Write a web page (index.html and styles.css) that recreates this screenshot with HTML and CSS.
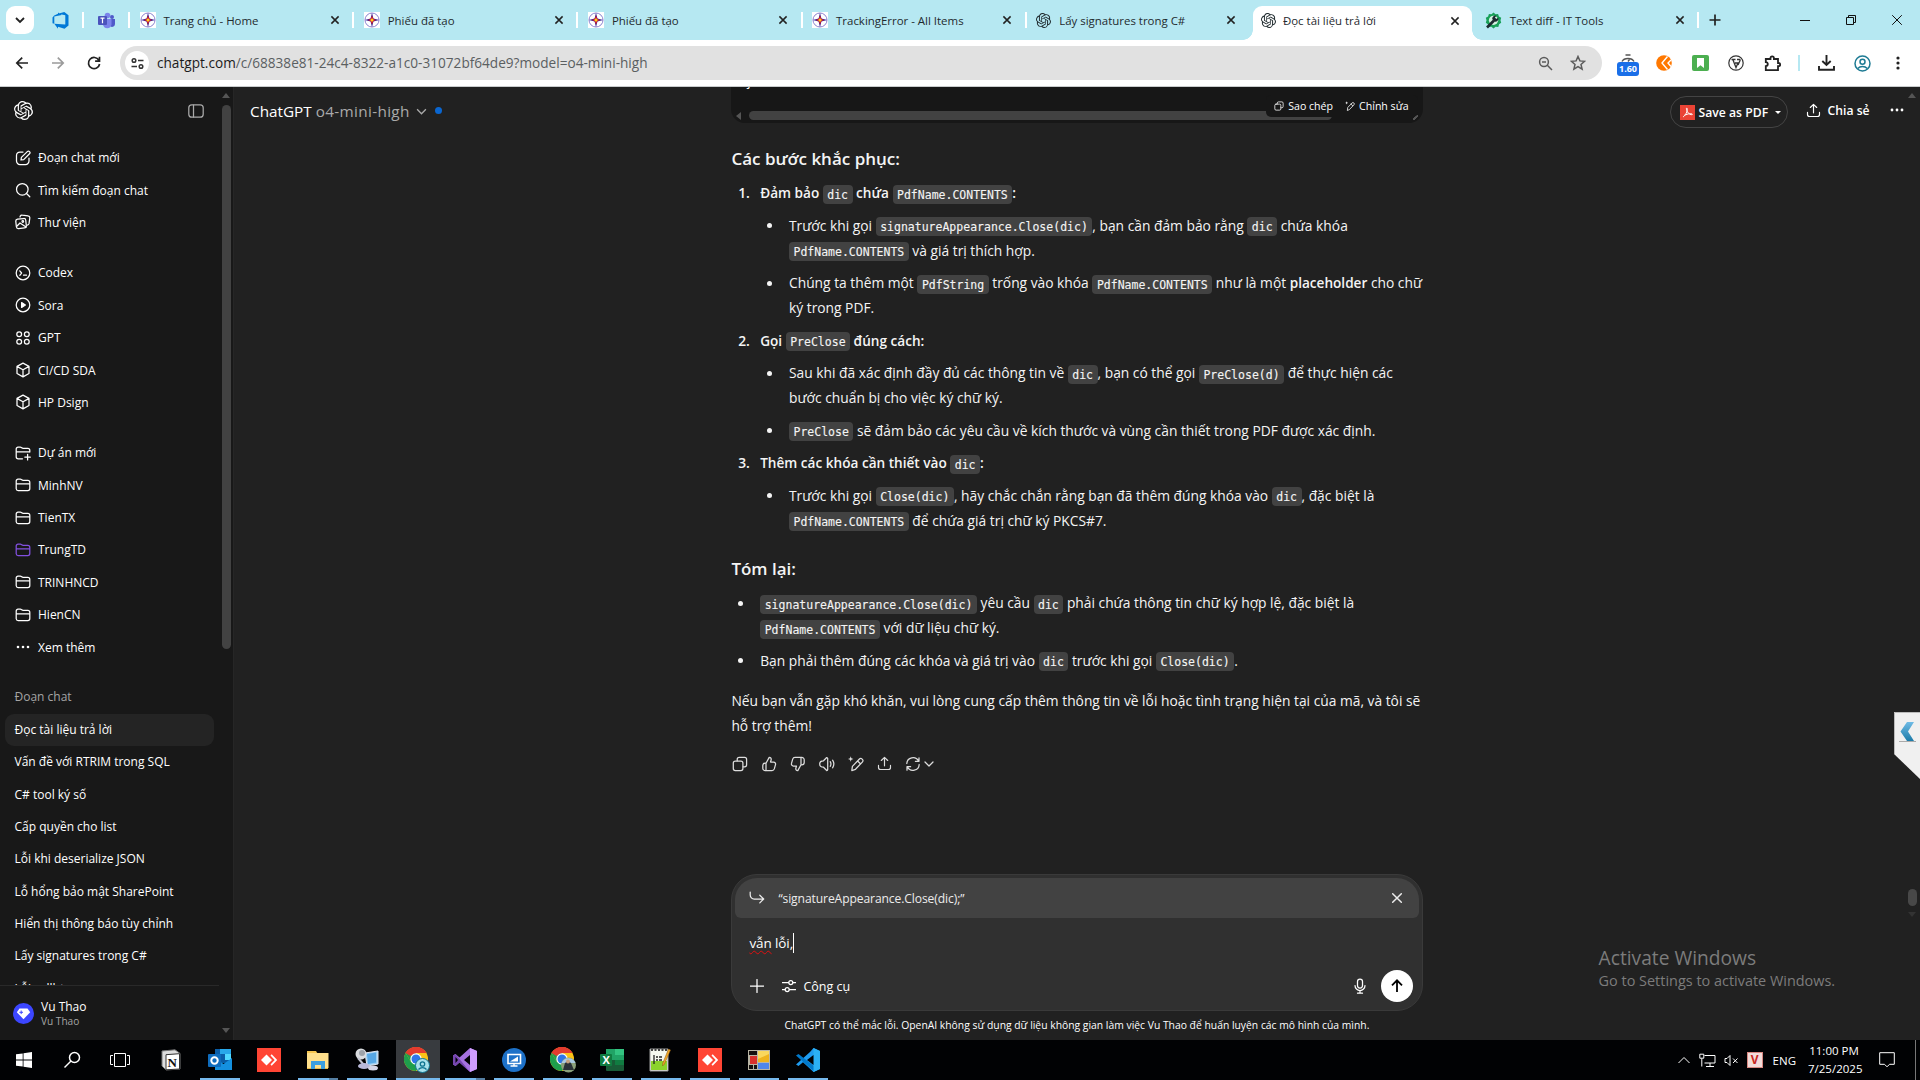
FILE: index.html
```
<!DOCTYPE html>
<html lang="vi">
<head>
<meta charset="utf-8">
<title>Đọc tài liệu trả lời</title>
<link rel="stylesheet" href="styles.css">
</head>
<body>
<svg width="0" height="0" class="defs">
  <symbol id="openai" viewBox="0 0 24 24"><path fill="currentColor" d="M22.2819 9.8211a5.9847 5.9847 0 0 0-.5157-4.9108 6.0462 6.0462 0 0 0-6.5098-2.9A6.0651 6.0651 0 0 0 4.9807 4.1818a5.9847 5.9847 0 0 0-3.9977 2.9 6.0462 6.0462 0 0 0 .7427 7.0966 5.98 5.98 0 0 0 .511 4.9107 6.051 6.051 0 0 0 6.5146 2.9001A5.9847 5.9847 0 0 0 13.2599 24a6.0557 6.0557 0 0 0 5.7718-4.2058 5.9894 5.9894 0 0 0 3.9977-2.9001 6.0557 6.0557 0 0 0-.7475-7.0729zm-9.022 12.6081a4.4755 4.4755 0 0 1-2.8764-1.0408l.1419-.0804 4.7783-2.7582a.7948.7948 0 0 0 .3927-.6813v-6.7369l2.02 1.1686a.071.071 0 0 1 .038.052v5.5826a4.504 4.504 0 0 1-4.4945 4.4944zm-9.6607-4.1254a4.4708 4.4708 0 0 1-.5346-3.0137l.142.0852 4.783 2.7582a.7712.7712 0 0 0 .7806 0l5.8428-3.3685v2.3324a.0804.0804 0 0 1-.0332.0615L9.74 19.9502a4.4992 4.4992 0 0 1-6.1408-1.6464zM2.3408 7.8956a4.485 4.485 0 0 1 2.3655-1.9728V11.6a.7664.7664 0 0 0 .3879.6765l5.8144 3.3543-2.0201 1.1685a.0757.0757 0 0 1-.071 0l-4.8303-2.7865A4.504 4.504 0 0 1 2.3408 7.872zm16.5963 3.8558L13.1038 8.364 15.1192 7.2a.0757.0757 0 0 1 .071 0l4.8303 2.7913a4.4944 4.4944 0 0 1-.6765 8.1042v-5.6772a.79.79 0 0 0-.407-.667zm2.0107-3.0231l-.142-.0852-4.7735-2.7818a.7759.7759 0 0 0-.7854 0L9.409 9.2297V6.8974a.0662.0662 0 0 1 .0284-.0615l4.8303-2.7866a4.4992 4.4992 0 0 1 6.6802 4.66zM8.3065 12.863l-2.02-1.1638a.0804.0804 0 0 1-.038-.0567V6.0742a4.4992 4.4992 0 0 1 7.3757-3.4537l-.142.0805L8.704 5.459a.7948.7948 0 0 0-.3927.6813zm1.0976-2.3654l2.602-1.4998 2.6069 1.4998v2.9994l-2.5974 1.4997-2.6067-1.4997Z"/></symbol>
  <symbol id="x" viewBox="0 0 10 10"><path d="M1.4 1.4l7.2 7.2M8.6 1.4L1.4 8.6"/></symbol>
  <symbol id="evn" viewBox="0 0 16 16"><rect width="16" height="16" fill="#fff" stroke="none"/><circle cx="8" cy="8" r="7" fill="none" stroke="#8d83d0" stroke-width="1"/><path d="M8 .8L9.4 6.6 15.2 8 9.4 9.4 8 15.2 6.6 9.4.8 8 6.6 6.6z" fill="#3a1f8f" stroke="none"/><path d="M8 3.5L9.3 6.7 12 8 9.3 9.3 8 12.5 6.7 9.3 4 8 6.7 6.7z" fill="#d5202e" stroke="none"/><circle cx="8" cy="8" r="1.5" fill="#ffd21f" stroke="none"/></symbol>
  <symbol id="folder" viewBox="0 0 16 16"><path d="M1.2 11.8V4A1.8 1.8 0 0 1 3 2.2h2.3c1.2 0 1.6 1.2 2.8 1.2h4.7a2 2 0 0 1 2 2v6.2a2 2 0 0 1-2 2H3.2a2 2 0 0 1-2-1.8zM1.2 6.8h13.6"/></symbol>
  <symbol id="cube" viewBox="0 0 16 16"><path d="M8 1.1l6 3.3v7.1L8 14.9l-6-3.4V4.4zM2.3 4.6L8 7.8l5.7-3.2M8 7.8v6.8"/></symbol>
  <symbol id="copy" viewBox="0 0 16 16"><rect x="1.3" y="5" width="9.6" height="9.6" rx="2"/><path d="M5.2 4.8V3.4a2 2 0 0 1 2-2h5.4a2 2 0 0 1 2 2v5.4a2 2 0 0 1-2 2h-1.4"/></symbol>
  <symbol id="wand" viewBox="0 0 16 16"><path d="M3.8 14.6l.6-4.2 6.800-7.200a2.100 2.100 0 0 1 3.100 2.900L7.500 13.300zM9.600 5l2.800 2.700"/><path d="M2.700 .3l.7 2 2 .7-2 .7-.7 2-.7-2-2-.7 2-.7z" fill="currentColor" stroke="none"/></symbol>
  <symbol id="share" viewBox="0 0 16 16"><path d="M8 10.5V1.6M4.6 4.8L8 1.4l3.4 3.4M1.6 10v2.2a2.2 2.2 0 0 0 2.2 2.2h8.4a2.2 2.2 0 0 0 2.2-2.2V10"/></symbol>
  <symbol id="down" viewBox="0 0 10 10"><path d="M1 3l4 4 4-4"/></symbol>
  <symbol id="thumb" viewBox="0 0 16 16"><path d="M5 7.2L8.2 1.4c1.6 0 2.3 1.2 1.9 2.6L9.5 6h3.1a2 2 0 0 1 1.9 2.6l-1.2 4.3a2.4 2.4 0 0 1-2.3 1.7H4.2a2.4 2.4 0 0 1-2.4-2.4V9.6A2.4 2.4 0 0 1 4.2 7.2H5v7.2"/></symbol>
  <symbol id="anydesk" viewBox="0 0 24 24"><rect width="24" height="24" fill="#ff4534"/><path d="M9.5 6.5L15 12l-5.500 5.500L4 12z" fill="#fff"/><path d="M13.5 7.500l1.200-1.200L20.200 12l-5.500 5.700-1.200-1.200L17.700 12z" fill="#fff"/></symbol>
  <symbol id="chrome" viewBox="0 0 24 24"><circle cx="12" cy="12" r="12" fill="#fbc116"/><path d="M12 12L1.600 6A12 12 0 0 1 22.400 6H12z" fill="#e33b2e"/><path d="M1.600 6A12 12 0 0 0 12 24l5.200-9L12 12 6.800 15z" fill="#1e9e4c"/><path d="M1.600 6L6.800 15 12 6z" fill="#1e9e4c"/><path d="M1.600 6A12 12 0 0 1 22.400 6H12L6.500 9z" fill="#e33b2e"/><circle cx="12" cy="12" r="5.700" fill="#fff"/><circle cx="12" cy="12" r="4.500" fill="#2f76e8"/></symbol>
</svg>

<div class="desktop">
<header class="tabstrip">
  <div class="tabsearch"><svg width="10" height="10"><use href="#down"/></svg></div>
  <div class="pinned"><svg width="17" height="17" viewBox="0 0 17 17"><path d="M.5 5.500L2.200 3.400 6 1.800V.4l3.600 2.500-7.300 1.500v7.300L.5 11.200zM16.500 3.200v10.400l-4 3.200-6.500-2.100v2L2.300 11.700l11 .9V3.200L6 1.800 12.300 0z" fill="#0078d7"/></svg></div>
  <div class="pinned"><svg width="17" height="17" viewBox="0 0 17 17"><circle cx="14" cy="5" r="2" fill="#5059c9"/><circle cx="9.500" cy="3.500" r="2.800" fill="#7b83eb"/><path d="M11 7h6v5a3 3 0 0 1-4.500 2.600z" fill="#5059c9"/><path d="M5 7h8.500v5.500a4.300 4.300 0 0 1-8.500 0z" fill="#7b83eb"/><rect x="0" y="4" width="9" height="9" rx="1" fill="#4b53bc"/><path d="M2.500 6.200h4M4.500 6.200v5" stroke="#fff" stroke-width="1.200"/></svg></div>
  <div class="tab"><svg class="fav" width="16" height="16"><use href="#evn"/></svg><span>Trang chủ - Home</span><svg class="cl" width="10" height="10"><use href="#x"/></svg></div>
  <div class="tab"><svg class="fav" width="16" height="16"><use href="#evn"/></svg><span>Phiếu đã tạo</span><svg class="cl" width="10" height="10"><use href="#x"/></svg></div>
  <div class="tab"><svg class="fav" width="16" height="16"><use href="#evn"/></svg><span>Phiếu đã tạo</span><svg class="cl" width="10" height="10"><use href="#x"/></svg></div>
  <div class="tab"><svg class="fav" width="16" height="16"><use href="#evn"/></svg><span>TrackingError - All Items</span><svg class="cl" width="10" height="10"><use href="#x"/></svg></div>
  <div class="tab nosep"><svg class="fav" width="15" height="15"><use href="#openai"/></svg><span>Lấy signatures trong C#</span><svg class="cl" width="10" height="10"><use href="#x"/></svg></div>
  <div class="tab active"><svg class="fav" width="15" height="15"><use href="#openai"/></svg><span>Đọc tài liệu trả lời</span><svg class="cl" width="10" height="10"><use href="#x"/></svg></div>
  <div class="tab"><svg class="fav" width="17" height="17" viewBox="0 0 17 17"><path d="M8.500 .5l2 1.700 2.600-.3.800 2.500 2.300 1.300-.7 2.600.7 2.500-2.100 1.500-.8 2.600-2.700-.1-2.100 1.700-2.100-1.700-2.700.1-.8-2.600L.8 10.800l.7-2.500L.8 5.700l2.300-1.300.8-2.500 2.600.3z" fill="#18a058"/><circle cx="8.500" cy="8.300" r="4.600" fill="#d5f1e2"/><path d="M2 15.500L9 8.500" stroke="#1c2a30" stroke-width="2.600"/><path d="M7.200 7a3.200 3.200 0 0 1 4.300-3.300L9.900 5.500l1.500 1.600 1.900-1.600A3.200 3.200 0 0 1 9.500 9.600z" fill="#1c2a30"/></svg><span>Text diff - IT Tools</span><svg class="cl" width="10" height="10"><use href="#x"/></svg></div>
  <svg class="newtab" width="12" height="12" viewBox="0 0 12 12"><path d="M6 .5v11M.5 6h11"/></svg>
  <div class="winbtns">
    <svg width="10" height="10" viewBox="0 0 10 10"><path d="M0 5.500h10"/></svg>
    <svg width="10" height="10" viewBox="0 0 10 10"><path d="M.5 2.500h7v7h-7zM2.500 2.500v-2h7v7h-2"/></svg>
    <svg width="10" height="10" viewBox="0 0 10 10"><path d="M.2 .2l9.600 9.600M9.800 .2L.2 9.800"/></svg>
  </div>
</header>

<div class="toolbar">
  <svg class="nav" width="36" height="18" viewBox="0 0 36 18"><path d="M24 9H13M18.200 3.600L12.800 9l5.400 5.400"/></svg>
  <svg class="nav dim" width="36" height="18" viewBox="0 0 36 18"><path d="M12 9h11M17.800 3.600L23.200 9l-5.400 5.400"/></svg>
  <svg class="nav" width="36" height="18" viewBox="0 0 36 18"><path d="M22.900 6.200A5.600 5.600 0 1 0 23.600 10M23.500 2.800v4.400h-4.400"/></svg>
  <div class="omnibox">
    <div class="chip"><svg width="13" height="13" viewBox="0 0 13 13"><circle cx="3" cy="3.500" r="1.800"/><path d="M7 3.500h5.500M.5 9.500H6"/><circle cx="10" cy="9.500" r="1.800"/></svg></div>
    <div class="url"><b>chatgpt.com</b>/c/68838e81-24c4-8322-a1c0-31072bf64de9?model=o4-mini-high</div>
    <svg width="15" height="15" viewBox="0 0 15 15"><circle cx="6" cy="6" r="4.400"/><path d="M9.300 9.300l4.700 4.700M4 6h4"/></svg>
    <svg class="star" width="16" height="16" viewBox="0 0 16 16"><path d="M8 1.500l1.900 4.400 4.700.4-3.600 3.100 1.100 4.700L8 11.600l-4.100 2.500L5 9.400 1.400 6.300l4.700-.4z"/></svg>
  </div>
  <div class="exts">
    <div class="timer"><svg width="16" height="8" viewBox="0 0 16 8"><path d="M2 7.500C4 3.500 12 3.500 14 7.500M5.500 1h5M8 7.500l1.500-2" fill="none" stroke="#555" stroke-width="1.400"/></svg><span>1.60</span></div>
    <svg width="16" height="16" viewBox="0 0 16 16"><circle cx="8" cy="8" r="7.800" fill="#ff7800"/><path d="M11.500 1.500L6 8l5.500 6.500M15 5l-3 3 3 3.500" fill="none" stroke="#fff" stroke-width="1.400"/></svg>
    <svg width="17" height="16" viewBox="0 0 17 16"><rect width="17" height="16" rx="2" fill="#4caf50"/><path d="M5 3h7v10l-3.500-2.800L5 13z" fill="#fff"/></svg>
    <svg width="16" height="16" viewBox="0 0 16 16"><circle cx="8" cy="8" r="7.200" fill="none" stroke="#333" stroke-width="1.200"/><path d="M3.500 4.500h4M5 5l3 7.500L10 8M7 8h3.500M9 4.500h3.500M12.300 5L10 10" fill="none" stroke="#333" stroke-width="1.300"/></svg>
    <svg width="17" height="17" viewBox="0 0 17 17"><path d="M1.800 4h4.700V3a1.700 1.700 0 0 1 3.400 0v1H14v4h.6a1.500 1.500 0 0 1 0 3.200H14v4H1.800v-4.100a2 2 0 0 0 0-4z" fill="none" stroke="#222" stroke-width="1.800"/></svg>
    <i class="extsep"></i>
    <svg width="17" height="16" viewBox="0 0 17 16"><path d="M8.500 0v9.500M4.300 6l4.200 4L12.700 6M1 11v3.700h15V11" fill="none" stroke="#222" stroke-width="1.900"/></svg>
    <svg width="17" height="17" viewBox="0 0 17 17" fill="none" stroke="#1e7b94" stroke-width="1.500"><circle cx="8.500" cy="8.500" r="7.500"/><circle cx="8.500" cy="6.800" r="2.500"/><path d="M3.700 13.500c2.500-2.700 7.100-2.700 9.600 0"/></svg>
    <svg width="4" height="14" viewBox="0 0 4 14" fill="#222"><circle cx="2" cy="2" r="1.600"/><circle cx="2" cy="7" r="1.600"/><circle cx="2" cy="12" r="1.600"/></svg>
  </div>
</div>

<div class="page">
  <aside class="sidebar">
    <div class="sidecol">
      <div class="sidehead"><svg width="19" height="19"><use href="#openai"/></svg><svg class="ln" width="16" height="14" viewBox="0 0 16 14"><rect x=".8" y=".8" width="14.400" height="12.400" rx="3"/><path d="M5.500 1v12"/></svg></div>
      <div class="group">
        <div class="item"><svg class="ln" width="16" height="16" viewBox="0 0 16 16"><path d="M8 2H5a3.500 3.500 0 0 0-3.500 3.500V11A3.500 3.500 0 0 0 5 14.500h5.500A3.500 3.500 0 0 0 14 11V8M6 10l.4-2.600L12.300 1.600a1.500 1.500 0 0 1 2.200 2.200L8.700 9.600z"/></svg>Đoạn chat mới</div>
        <div class="item"><svg class="ln" width="16" height="16" viewBox="0 0 16 16"><circle cx="7.300" cy="7.300" r="5.800"/><path d="M11.500 11.500l3.300 3.300"/></svg>Tìm kiếm đoạn chat</div>
        <div class="item"><svg class="ln" width="16" height="16" viewBox="0 0 16 16"><rect x="1" y="4.800" width="10" height="9.500" rx="2" transform="rotate(-6 6 9)"/><path d="M5 3l.3-.9a1.800 1.800 0 0 1 2-1l5.700.7a2 2 0 0 1 1.800 2.300l-.8 5.600a2 2 0 0 1-1.700 1.500M2 12l3-3 6 4"/><circle cx="7.800" cy="7.500" r=".8"/></svg>Thư viện</div>
      </div>
      <div class="group">
        <div class="item"><svg class="ln" width="16" height="16" viewBox="0 0 16 16"><circle cx="8" cy="8" r="6.800"/><path d="M4.800 5.800L6.600 8l-1.800 2.300M8.500 10.200h3"/></svg>Codex</div>
        <div class="item"><svg class="ln" width="16" height="16" viewBox="0 0 16 16"><circle cx="8" cy="8" r="6.800"/><path d="M6.600 5.600L10.400 8l-3.800 2.400z" fill="currentColor"/></svg>Sora</div>
        <div class="item"><svg class="ln" width="16" height="16" viewBox="0 0 16 16"><circle cx="4.200" cy="4.200" r="2.400"/><circle cx="11.800" cy="4.200" r="2.400"/><circle cx="4.200" cy="11.800" r="2.400"/><circle cx="11.800" cy="11.800" r="2.400"/></svg>GPT</div>
        <div class="item"><svg class="ln" width="16" height="16"><use href="#cube"/></svg>CI/CD SDA</div>
        <div class="item"><svg class="ln" width="16" height="16"><use href="#cube"/></svg>HP Dsign</div>
      </div>
      <div class="group">
        <div class="item"><svg class="ln" width="16" height="16" viewBox="0 0 16 16"><path d="M7.500 13.800H3.200a2 2 0 0 1-2-2V4A1.800 1.800 0 0 1 3 2.200h2.300c1.200 0 1.600 1.200 2.800 1.200h4.700a2 2 0 0 1 2 2V7M1.200 6.800h13.600M12.600 9.300v5.600M9.800 12.100h5.600"/></svg>Dự án mới</div>
        <div class="item"><svg class="ln" width="16" height="16"><use href="#folder"/></svg>MinhNV</div>
        <div class="item"><svg class="ln" width="16" height="16"><use href="#folder"/></svg>TienTX</div>
        <div class="item"><svg class="ln violet" width="16" height="16"><use href="#folder"/></svg>TrungTD</div>
        <div class="item"><svg class="ln" width="16" height="16"><use href="#folder"/></svg>TRINHNCD</div>
        <div class="item"><svg class="ln" width="16" height="16"><use href="#folder"/></svg>HienCN</div>
        <div class="item"><svg width="16" height="16" viewBox="0 0 16 16" fill="currentColor"><circle cx="3" cy="8" r="1.300"/><circle cx="8" cy="8" r="1.300"/><circle cx="13" cy="8" r="1.300"/></svg>Xem thêm</div>
      </div>
      <div class="chats">
        <div class="chat label">Đoạn chat</div>
        <div class="chat current">Đọc tài liệu trả lời</div>
        <div class="chat">Vấn đề với RTRIM trong SQL</div>
        <div class="chat">C# tool ký số</div>
        <div class="chat">Cấp quyền cho list</div>
        <div class="chat">Lỗi khi deserialize JSON</div>
        <div class="chat">Lỗ hổng bảo mật SharePoint</div>
        <div class="chat">Hiển thị thông báo tùy chỉnh</div>
        <div class="chat">Lấy signatures trong C#</div>
        <div class="chat">Lỗi callbtree</div>
      </div>
      <div class="account">
        <svg width="21" height="21" viewBox="0 0 21 21"><circle cx="10.500" cy="10.500" r="10.500" fill="#3c46ff"/><path d="M6.500 5.500h8l2.700 3.700-6.700 7-6.700-7z" fill="#fff"/><path d="M8.200 7.500v3.600M6.400 9.300H10" stroke="#3c46ff"/></svg>
        <div><p>Vu Thao</p><small>Vu Thao</small></div>
      </div>
    </div>
    <div class="sidescroll"><i class="up"></i><i class="bar"></i><i class="dn"></i></div>
  </aside>

  <main class="main">
    <div class="lefthead"><strong>ChatGPT</strong><span>o4-mini-high</span><svg width="11" height="11"><use href="#down"/></svg><i></i></div>
    <div class="column">
      <div class="codeblock"><span class="brace">}</span><i class="larrow"></i><i class="hbar"></i><i class="rarrow"></i>
        <div class="codebtns"><svg class="ln" width="10" height="10"><use href="#copy"/></svg><span>Sao chép</span><svg class="ln" width="10" height="10"><use href="#wand"/></svg><span>Chỉnh sửa</span></div>
      </div>
      <article>
        <h3>Các bước khắc phục:</h3>
        <ol>
          <li><b>Đảm bảo <code>dic</code> chứa <code>PdfName.CONTENTS</code>:</b>
            <ul>
              <li>Trước khi gọi <code>signatureAppearance.Close(dic)</code>, bạn cần đảm bảo rằng <code>dic</code> chứa khóa<br><code>PdfName.CONTENTS</code> và giá trị thích hợp.</li>
              <li>Chúng ta thêm một <code>PdfString</code> trống vào khóa <code>PdfName.CONTENTS</code> như là một <b>placeholder</b> cho chữ<br>ký trong PDF.</li>
            </ul></li>
          <li><b>Gọi <code>PreClose</code> đúng cách:</b>
            <ul>
              <li>Sau khi đã xác định đầy đủ các thông tin về <code>dic</code>, bạn có thể gọi <code>PreClose(d)</code> để thực hiện các<br>bước chuẩn bị cho việc ký chữ ký.</li>
              <li><code>PreClose</code> sẽ đảm bảo các yêu cầu về kích thước và vùng cần thiết trong PDF được xác định.</li>
            </ul></li>
          <li><b>Thêm các khóa cần thiết vào <code>dic</code>:</b>
            <ul>
              <li>Trước khi gọi <code>Close(dic)</code>, hãy chắc chắn rằng bạn đã thêm đúng khóa vào <code>dic</code>, đặc biệt là<br><code>PdfName.CONTENTS</code> để chứa giá trị chữ ký PKCS#7.</li>
            </ul></li>
        </ol>
        <h3>Tóm lại:</h3>
        <ul>
          <li><code>signatureAppearance.Close(dic)</code> yêu cầu <code>dic</code> phải chứa thông tin chữ ký hợp lệ, đặc biệt là<br><code>PdfName.CONTENTS</code> với dữ liệu chữ ký.</li>
          <li>Bạn phải thêm đúng các khóa và giá trị vào <code>dic</code> trước khi gọi <code>Close(dic)</code>.</li>
        </ul>
        <p>Nếu bạn vẫn gặp khó khăn, vui lòng cung cấp thêm thông tin về lỗi hoặc tình trạng hiện tại của mã, và tôi sẽ<br>hỗ trợ thêm!</p>
      </article>
      <div class="actions">
        <svg class="ln" width="16" height="16"><use href="#copy"/></svg>
        <svg class="ln" width="16" height="16"><use href="#thumb"/></svg>
        <svg class="ln flip" width="16" height="16"><use href="#thumb"/></svg>
        <svg class="ln" width="16" height="16" viewBox="0 0 16 16"><path d="M7.700 1.500L4.500 4.800C2 4.800.7 5.500.7 8s1.300 3.200 3.800 3.200l3.200 3.300c.7 0 1-.3 1-1V2.500c0-.7-.3-1-1-1zM11.200 5.700c.9 1.400.9 3.200 0 4.600M13.600 4.200c1.500 2.300 1.500 5.300 0 7.600"/></svg>
        <svg class="ln" width="16" height="16"><use href="#wand"/></svg>
        <svg class="ln" width="15" height="15"><use href="#share"/></svg>
        <svg class="ln" width="16" height="16" viewBox="0 0 16 16"><path d="M1.800 7.500A6.200 6.200 0 0 1 13.500 5M14 1.800V5.300h-3.600M14.200 8.500A6.200 6.200 0 0 1 2.500 11M2 14.200v-3.500h3.600"/></svg>
        <svg class="ln chev" width="10" height="10"><use href="#down"/></svg>
      </div>
      <form class="composer">
        <div class="quote"><svg class="ln" width="16" height="14" viewBox="0 0 16 14"><path d="M1.200 1v3a4 4 0 0 0 4 4h9.300M10.800 4.200L14.700 8l-3.900 3.900"/></svg><span>“signatureAppearance.Close(dic);”</span><svg class="ln" width="12" height="12"><use href="#x"/></svg></div>
        <div class="prompt"><u>vẫn</u> lỗi,<i></i></div>
        <div class="tools">
          <svg class="ln" width="14" height="14" viewBox="0 0 14 14"><path d="M7 .5v13M.5 7h13"/></svg>
          <svg class="ln sl" width="14" height="14" viewBox="0 0 14 14"><path d="M.5 3.500h6M11 3.500h2.500M.5 10.500H3M7.500 10.500h6"/><circle cx="8.800" cy="3.500" r="2"/><circle cx="5.200" cy="10.500" r="2"/></svg>
          <span>Công cụ</span>
          <svg class="ln" width="12" height="16" viewBox="0 0 12 16"><rect x="3.500" y="1" width="5" height="9" rx="2.500"/><path d="M1 7.500a5 5 0 0 0 10 0M6 12.500v2.700M3.500 15.200h5"/></svg>
          <div class="send"><svg width="12" height="14" viewBox="0 0 12 14"><path d="M6 13V1.500M1 6.300L6 1.300l5 5"/></svg></div>
        </div>
      </form>
      <p class="disclaimer">ChatGPT có thể mắc lỗi. OpenAI không sử dụng dữ liệu không gian làm việc Vu Thao để huấn luyện các mô hình của mình.</p>
    </div>
    <div class="right">
      <div class="righthead">
        <div class="pdf"><svg width="15" height="15" viewBox="0 0 15 15"><rect width="15" height="15" fill="#ea4335"/><path d="M3 12c2-1 5-6 4.200-8.500-1-1.500-1.200 1 .2 3.300C8.500 8.800 11 10.300 12.300 9.500c.5-1.500-4-1-8 .8" fill="none" stroke="#fff"/></svg><b>Save as PDF</b><i></i></div>
        <svg class="ln" width="15" height="15"><use href="#share"/></svg><b class="sharetext">Chia sẻ</b>
        <svg width="16" height="4" viewBox="0 0 16 4" fill="#fff"><circle cx="3" cy="2" r="1.400"/><circle cx="8" cy="2" r="1.400"/><circle cx="13" cy="2" r="1.400"/></svg>
      </div>
      <div class="watermark"><h4>Activate Windows</h4><p>Go to Settings to activate Windows.</p></div>
    </div>
    <i class="mup"></i><i class="mthumb"></i><i class="mdn"></i>
    <svg class="flag" width="26" height="67" viewBox="0 0 26 67"><defs><linearGradient id="fg" x2="0" y2="1"><stop offset="0" stop-color="#6fbbe6"/><stop offset="1" stop-color="#1d7ba8"/></linearGradient></defs><path d="M0 0h26v67L0 42z" fill="#f0f0f0"/><path d="M.5 42V.5H26" fill="none" stroke="#bbb"/><path d="M13 10h7l-6 9.500 6 9.500h-7L6.500 19.500z" fill="url(#fg)"/><path d="M5 29.500h17" stroke="#aaa"/></svg>
  </main>
</div>

<footer class="taskbar">
  <div class="tb"><svg width="16" height="16" viewBox="0 0 16 16" fill="#fff"><path d="M0 2.300l6.700-.9v6.200H0zM7.500 1.300L16 0v7.600H7.500zM0 8.400h6.700v6.200L0 13.700zM7.500 8.400H16V16l-8.500-1.200z"/></svg></div>
  <div class="tb"><svg width="18" height="18" viewBox="0 0 18 18" fill="none" stroke="#fff" stroke-width="1.500"><circle cx="11.500" cy="6.500" r="5"/><path d="M8 10L1.500 16.500"/></svg></div>
  <div class="tb"><svg width="20" height="16" viewBox="0 0 20 16" fill="none" stroke="#fff"><path d="M4.500 1.500h11v13h-11zM3 3.500H.5v9H3M17 3.500h2.500v9H17"/></svg></div>
  <div class="tb app first"><svg width="22" height="22" viewBox="0 0 22 22"><path d="M2 2l13-1.200 5 3.600V20L6 21l-4-4z" fill="#ddd" stroke="#777"/><path d="M6 5.700l13.500-1V20L6 20.800z" fill="#fff" stroke="#333"/><text x="7.500" y="17.800" font-size="13" font-weight="700" font-family="Liberation Serif, serif" fill="#111">N</text></svg></div>
  <div class="tb app run"><svg width="24" height="24" viewBox="0 0 24 24"><rect x="7" y="1" width="16" height="14" fill="#0a5ea8"/><path d="M12 1h11v5H12z" fill="#28a8ea"/><path d="M17 6h6v6h-6z" fill="#50d9ff"/><path d="M7 22V10l8.500 6L24 10v12z" fill="#1490df"/><rect x="0" y="6" width="13" height="13" rx="1" fill="#0f6cbd"/><circle cx="6.500" cy="12.500" r="3.200" fill="none" stroke="#fff" stroke-width="2"/></svg></div>
  <div class="tb app"><svg width="24" height="24"><use href="#anydesk"/></svg></div>
  <div class="tb app run stack"><svg width="24" height="20" viewBox="0 0 24 20"><path d="M1 1h9l2 3h10v15H1z" fill="#e9b949"/><path d="M1 3h21.500v15H1z" fill="#ffe08c"/><path d="M1 1h9v2H1z" fill="#f7c64f"/><path d="M5 19v-8h14v8h-4v-4H9v4z" fill="#3b9fe0"/></svg></div>
  <div class="tb app run"><svg width="24" height="24" viewBox="0 0 24 24"><path d="M10 5l13-2v13l-11 2z" fill="#9bd0f3" stroke="#e5e8f4"/><path d="M12 6l9-1.500v10L13 16z" fill="#57a7e5"/><circle cx="6" cy="6" r="5.500" fill="#d9dce0"/><circle cx="7" cy="5" r="3" fill="#9da3aa"/><path d="M3 10l6 7" stroke="#c3c5d2" stroke-width="2"/><ellipse cx="9" cy="18" rx="6" ry="3" fill="#b9b9da"/><ellipse cx="18" cy="20" rx="5" ry="2.500" fill="#d4d4e5"/></svg></div>
  <div class="tb app run hot"><svg width="26" height="26" viewBox="0 0 26 26"><use href="#chrome" width="24" height="24"/><circle cx="18.500" cy="18.500" r="7" fill="#a8e1ec" stroke="#0e7490"/><circle cx="18.500" cy="17" r="2.200" fill="none" stroke="#0e7490" stroke-width="1.300"/><path d="M14.500 22.500c2-2.600 6-2.600 8 0" fill="none" stroke="#0e7490" stroke-width="1.300"/></svg></div>
  <div class="tb app run stack"><svg width="24" height="24" viewBox="0 0 24 24"><path d="M17 0l7 3v18l-7 3L6.500 14.500 2.500 18 0 16.500v-9L2.500 6l4 3.500z" fill="#a672e0"/><path d="M17 0l7 3v18l-7 3z" fill="#cf9cff"/><path d="M0 7.500L2.500 6l14.500 18-10.500-9.500L2.500 18 0 16.500z" fill="#7646b0"/><path d="M17 7v10l-6-5zM2.500 9v6L5 12z" fill="#010204"/></svg></div>
  <div class="tb app run"><svg width="24" height="24" viewBox="0 0 24 24"><circle cx="12" cy="12" r="12" fill="#1d71c8"/><path d="M6 6.500h12.500v9H6z" fill="none" stroke="#fff" stroke-width="1.600"/><path d="M8 13.500l8-5v5z" fill="#fff"/><path d="M12 15v3M8.500 18h7" stroke="#fff" stroke-width="1.400"/></svg></div>
  <div class="tb app run"><svg width="26" height="26" viewBox="0 0 26 26"><use href="#chrome" width="24" height="24"/><circle cx="18.500" cy="18" r="7.500" fill="#8ba07b"/><path d="M11.500 16a7.500 7.500 0 0 1 14 0z" fill="#a9c9e3"/><path d="M13 23l2-7 3-2 3 2 3 7z" fill="#2a3138"/><circle cx="18" cy="14.500" r="2" fill="#c6a17f"/></svg></div>
  <div class="tb app run"><svg width="24" height="22" viewBox="0 0 24 22"><rect x="6" y="0" width="18" height="22" rx="1" fill="#185c37"/><path d="M6 0h9v11H6z" fill="#21a366"/><path d="M15 0h9v6h-9z" fill="#33c481"/><path d="M15 6h9v5h-9z" fill="#21a366"/><path d="M15 11h9v5h-9z" fill="#107c41"/><rect x="0" y="5" width="12" height="12" rx="1" fill="#107c41"/><text x="2.500" y="14.800" font-size="11" font-weight="700" font-family="Open Sans, sans-serif" fill="#fff">X</text></svg></div>
  <div class="tb app run"><svg width="24" height="24" viewBox="0 0 24 24"><path d="M1 1h18v22H1z" fill="#f4f7ee" stroke="#9a9a9a"/><path d="M2 13h16v9H2z" fill="#8bd32c"/><path d="M2 2h16" stroke="#444" stroke-dasharray="2 1.500" stroke-width="2"/><path d="M5 7v9M7 9h2M10 9h3M7 12h2M10 12h3" stroke="#222" stroke-width="1.300"/><path d="M21.500 2l-6 14-2 2 .3-3L19.500 1z" fill="#f0a728" stroke="#8a5914" stroke-width=".5"/></svg></div>
  <div class="tb app run"><svg width="24" height="24"><use href="#anydesk"/></svg></div>
  <div class="tb app run"><svg width="22" height="22" viewBox="0 0 22 22"><path d="M0 1h22v20H0z" fill="#b9b5a5"/><path d="M1 2h8v4H1zM1 16h4v4H1zM6 16h3v4H6z" fill="#15100e"/><path d="M2 7h7v8H2z" fill="#d8302b"/><path d="M10 2h11v11H10z" fill="#efb41d"/><path d="M10 14h11v6H10z" fill="#4f86ec"/><path d="M10 2h11v3l-11 5z" fill="#f9d75d"/></svg></div>
  <div class="tb app run"><svg width="24" height="24" viewBox="0 0 24 24"><path d="M17.500 0L24 3v18l-6.500 3L7 14.200 2.500 18 0 16.500 14 4z" fill="#1f9cf0"/><path d="M0 7.500L2.500 6 18 18v5.500L0 7.500z" fill="#0179cb"/><path d="M17.500 0L24 3v18l-6.500 3z" fill="#2bb0f5"/><path d="M17.500 7v10L11 12z" fill="#010204"/></svg></div>
  <div class="tray">
    <svg width="14" height="8" viewBox="0 0 14 8"><path d="M1.500 7L7 1.500 12.500 7"/></svg>
    <svg width="17" height="15" viewBox="0 0 17 15"><path d="M5.500 2.500h10.500v7.500H5.500M11 10v3M7 13.500h8M.8 1.200h4v4h-4zM2.800 5.500v8"/></svg>
    <svg width="15" height="13" viewBox="0 0 15 13"><path d="M1 4.500h2l3-3v10l-3-3H1zM9 4.500l4.500 4.500M13.500 4.500L9 9"/></svg>
    <b class="vkey">V</b>
    <span class="lang">ENG</span>
    <div class="clock">11:00 PM<br>7/25/2025</div>
    <svg width="16" height="16" viewBox="0 0 16 16"><path d="M.7.7h14.600v11.600h-4.800L8 14.800 5.500 12.300H.7z"/></svg>
    <i class="edge"></i>
  </div>
</footer>
</div>
</body>
</html>
```
FILE: styles.css
```
* { box-sizing: border-box; margin: 0; padding: 0; }
body { width: 1920px; height: 1080px; overflow: hidden; font-family: "Open Sans", "Noto Sans", sans-serif; background: #212121; color: #fff; }
svg { display: block; flex: none; }
.defs { position: absolute; }
.desktop { display: flex; flex-direction: column; height: 1080px; white-space: nowrap; }
.ln { fill: none; stroke: currentColor; stroke-width: 1.25; stroke-linecap: round; stroke-linejoin: round; }

/* Tab strip */
.tabstrip { height: 40px; flex: none; display: flex; align-items: center; background: #b6e8f2; padding-left: 6px; color: #1f2a2e; }
.tabsearch { width: 28px; height: 28px; border-radius: 9px; background: #fff; display: flex; align-items: center; justify-content: center; margin-right: 4px; stroke: #222; stroke-width: 1.8; fill: none; }
.pinned { width: 46px; height: 16px; display: flex; align-items: center; justify-content: center; border-right: 2px solid #fff; }
.tab { width: 224.2px; height: 16px; display: flex; align-items: center; padding: 0 12.500px 0 9.500px; border-right: 2px solid #fff; font-size: 11.45px; }
.tab.nosep { border-color: transparent; }
.tab .fav { margin-right: 8px; }
.tab span { flex: 1; }
.tab .cl { stroke: #222; stroke-width: 1.5; }
.tab.active { height: 34px; margin: 6px 3.200px 0 2px; width: 219px; padding: 0 12px 5px 8px; background: #fff; border: 0; border-radius: 9px 9px 0 0; position: relative; }
.tab.active .fav { margin-right: 7px; }
.tab.active::before, .tab.active::after { content: ""; position: absolute; bottom: 0; width: 10px; height: 10px; }
.tab.active::before { right: 100%; background: radial-gradient(circle at 0 0, transparent 9.500px, #fff 10px); }
.tab.active::after { left: 100%; background: radial-gradient(circle at 100% 0, transparent 9.500px, #fff 10px); }
.newtab { margin-left: 10px; stroke: #222; stroke-width: 1.7; }
.winbtns { margin-left: auto; display: flex; gap: 36px; padding-right: 18px; stroke: #111; fill: none; }

/* Toolbar */
.toolbar { height: 47px; flex: none; background: #fff; border-bottom: 1px solid #c9cccd; display: flex; align-items: center; padding-left: 4px; }
.nav { stroke: #222; stroke-width: 1.7; fill: none; }
.nav.dim { stroke: #9b9b9b; }
.omnibox { margin-left: 8px; width: 1482px; height: 34px; border-radius: 17px; background: #e1e1e1; display: flex; align-items: center; padding: 0 16px 0 5px; stroke: #5b5b5b; stroke-width: 1.5; fill: none; }
.chip { width: 24px; height: 24px; border-radius: 50%; background: #fff; display: flex; align-items: center; justify-content: center; margin-right: 8px; stroke: #333; }
.url { flex: 1; font-size: 13.62px; line-height: 18px; margin-top: -1px; color: #5b5f61; }
.url b { color: #1b1b1b; font-weight: 400; }
.star { margin-left: 17px; }
.exts { display: grid; grid-template-columns: repeat(5, 36px) 18px repeat(3, 36px); align-items: center; justify-items: center; padding-left: 8px; }
.timer { width: 22px; display: flex; flex-direction: column; align-items: center; margin-top: 4px; }
.timer span { background: #1a6fe8; color: #fff; font-weight: 700; font-size: 9px; line-height: 14px; width: 22px; text-align: center; border-radius: 3px; }
.extsep { width: 2px; height: 16px; background: #b6e8f2; }

.page { flex: 1; min-height: 0; display: flex; }

/* Sidebar */
.sidebar { width: 234px; background: #181818; border-right: 1px solid #262626; display: flex; font-size: 12px; }
.sidecol { width: 219px; display: flex; flex-direction: column; }
.sidehead { height: 54.500px; flex: none; padding: 6px 15px 13.500px 14px; display: flex; align-items: center; justify-content: space-between; }
.sidehead .ln { color: #aaa; }
.group { margin-bottom: 18px; flex: none; }
.item { height: 32.4px; display: flex; align-items: center; gap: 7px; padding-left: 15px; }
.violet { color: #8250df; }
.chats { flex: 1; min-height: 0; overflow: hidden; }
.chat { height: 32.4px; line-height: 32.4px; padding-left: 9.500px; margin: 0 5px; border-radius: 9px; }
.chat.label { color: #a5a5a5; }
.chat.current { background: #242424; }
.account { height: 55px; flex: none; border-top: 1px solid #292929; display: flex; align-items: center; padding-left: 13px; gap: 7px; }
.account p { font-size: 12px; line-height: 16px; }
.account small { display: block; font-size: 10.1px; line-height: 13px; color: #a5a5a5; }
.sidescroll { width: 13px; margin-left: auto; display: flex; flex-direction: column; align-items: center; padding: 6px 1px 7px 0; }
.up, .mup { border: 4px solid transparent; border-top: 0; border-bottom: 5px solid #555; }
.dn, .mdn { border: 4px solid transparent; border-bottom: 0; border-top: 5px solid #555; }
.bar { width: 9px; height: 544px; margin-top: 7px; border-radius: 5px; background: #424242; }
.dn { margin-top: auto; }

/* Conversation */
.main { flex: 1; display: flex; position: relative; }
.lefthead { width: 497.400px; height: 48px; display: flex; align-items: center; padding-left: 16px; font-size: 15.3px; }
.lefthead strong { font-weight: 400; margin-right: 4px; }
.lefthead span { color: #aaa; margin-right: 6px; letter-spacing: .33px; }
.lefthead svg { fill: none; stroke: #aaa; stroke-width: 1.2; }
.lefthead i { width: 7px; height: 7px; border-radius: 50%; background: #0a66d0; margin-left: 8px; margin-bottom: 2px; }
.column { width: 691.200px; height: 953px; display: flex; flex-direction: column; }
.codeblock { height: 36px; flex: none; background: #171717; border-radius: 0 0 14px 14px; display: flex; align-items: flex-end; padding: 0 5px 3px 5px; position: relative; overflow: hidden; }
.brace { position: absolute; left: 14px; top: -11px; font: 12px/14px "DejaVu Sans Mono", monospace; }
.larrow { border: 4.500px solid transparent; border-left: 0; border-right: 5px solid #555; }
.rarrow { margin-left: auto; width: 5px; height: 5px; background: linear-gradient(135deg, transparent 35%, #555 35% 65%, transparent 65%); }
.hbar { width: 583px; height: 9px; margin-left: 8px; border-radius: 5px; background: #424242; }
.codebtns { position: absolute; right: 5px; top: 8px; height: 22px; padding: 0 9px 0 8px; background: #171717; border-radius: 5px; display: flex; align-items: center; gap: 4px; font-size: 10.6px; }
.codebtns span:nth-of-type(1) { margin-right: 8px; }
article { font-size: 13.8px; line-height: 25.2px; color: #f4f4f4; }
h3 { font-size: 17px; font-weight: 600; line-height: 27px; margin: 21.500px 0 8.700px; }
ol + h3 { margin: 22.300px 0 8px; }
ol { padding-left: 28.800px; list-style: none; counter-reset: step; }
ul { padding-left: 28.800px; list-style: none; }
ol ul { margin-top: 7.200px; }
li + li { margin-top: 7.200px; }
ul > li::before { content: ""; float: left; width: 5px; height: 5px; border-radius: 50%; background: #f4f4f4; margin: 10.500px 17px 0 -22px; }
ol > li { counter-increment: step; }
ol > li::before { content: counter(step) "."; float: left; width: 16px; margin: 0 6px 0 -22px; font-weight: 600; }
article b { font-weight: 600; font-size: 13.6px; }
code { font: 11.500px/1 "DejaVu Sans Mono", monospace; background: #424242; border-radius: 4px; padding: 2.600px 4.500px; -webkit-text-stroke: .12px #f4f4f4; }
article > p { margin-top: 15.200px; }
.actions { display: flex; align-items: center; height: 16px; margin: 17.300px 0 0 1px; gap: 13px; color: #ddd; }
.actions .chev { margin-left: -10px; }
.flip { transform: scaleY(-1) scaleX(-1); }

/* Composer */
.composer { margin-top: auto; height: 137px; flex: none; background: #303030; border: 1px solid #3a3a3a; border-radius: 26px; padding: 3px; }
.quote { height: 40px; background: #424242; border-radius: 22px 22px 6px 6px; display: flex; align-items: center; padding: 0 16px 0 14px; gap: 13px; font-size: 12.1px; color: #ececec; letter-spacing: -.1px; }
.quote span { flex: 1; }
.prompt { height: 50px; display: flex; align-items: center; padding-left: 14px; font-size: 13.500px; letter-spacing: -.1px; white-space: pre; }
.prompt u { text-decoration: underline wavy #e01010 1px; text-underline-offset: 2px; text-decoration-skip-ink: none; }
.prompt i { width: 1px; height: 20px; background: #fff; }
.tools { display: flex; align-items: center; height: 36px; padding: 0 5.500px 0 15px; font-size: 12.500px; }
.tools .sl { margin: 0 7px 0 18px; }
.tools span { flex: 1; }
.send { width: 32px; height: 32px; border-radius: 50%; background: #fff; margin-left: 15px; display: flex; align-items: center; justify-content: center; stroke: #000; stroke-width: 1.800; fill: none; }
.disclaimer { font-size: 10.350px; line-height: 29px; text-align: center; }

.right { flex: 1; display: flex; flex-direction: column; align-items: flex-start; justify-content: space-between; padding-bottom: 49px; }
.righthead { width: 100%; display: flex; align-items: center; padding: 9px 15px 0 247px; height: 42px; font-size: 12.200px; }
.righthead > * { margin-bottom: 5px; }
.righthead b { font-weight: 600; }
.righthead .pdf { width: 118px; height: 32px; margin: 0 18px 1px 0; border: 1px solid #444; border-radius: 16px; display: flex; align-items: center; gap: 4px; padding-left: 9px; }
.pdf i { margin-left: 3px; border: 3px solid transparent; border-bottom: 0; border-top-color: #fff; }
.righthead .sharetext { margin: 0 auto 5px 7px; }
.watermark { padding-left: 176px; color: #7c7c7c; }
.watermark h4 { font-weight: 400; font-size: 19.200px; line-height: 26px; }
.watermark p { font-size: 14.450px; line-height: 20px; }
.mup { position: absolute; right: 4px; top: 6px; }
.mdn { position: absolute; right: 4px; top: 825px; border-top-color: #333; }
.mthumb { position: absolute; right: 3px; top: 802px; width: 9px; height: 17px; border-radius: 5px; background: #484848; }
.flag { position: absolute; right: 0; top: 625px; }

/* Taskbar */
.taskbar { height: 40px; flex: none; background: #010204; display: flex; }
.tb { width: 48px; display: flex; align-items: center; justify-content: center; }
.tb.app { width: 40px; margin-right: 9px; border: solid transparent; border-width: 2px 0; }
.tb.first { margin-left: 7px; }
.tb.run { border-bottom-color: #76b9ed; }
.tb.hot { width: 44px; margin: 0 5px 0 0; padding-right: 2px; background: #383b3f; }
.tb.stack { border-image: linear-gradient(90deg, #76b9ed 31px, #557fa3 31px) 0 0 2 0; }
.tray { margin-left: auto; display: flex; align-items: center; font-size: 11.500px; stroke: #fff; fill: none; }
.tray svg + svg { margin-left: 8px; }
.vkey { width: 16px; height: 16px; margin-left: 8px; border: 1px solid #d98882; background: #f3dcda; color: #c8281e; font-size: 12px; line-height: 14px; text-align: center; }
.lang { margin: 0 12px 0 10px; }
.clock { width: 52px; text-align: center; line-height: 18px; margin-right: 19px; }
.edge { width: 1px; height: 40px; background: #777; margin: 0 4px 0 20px; }
```
